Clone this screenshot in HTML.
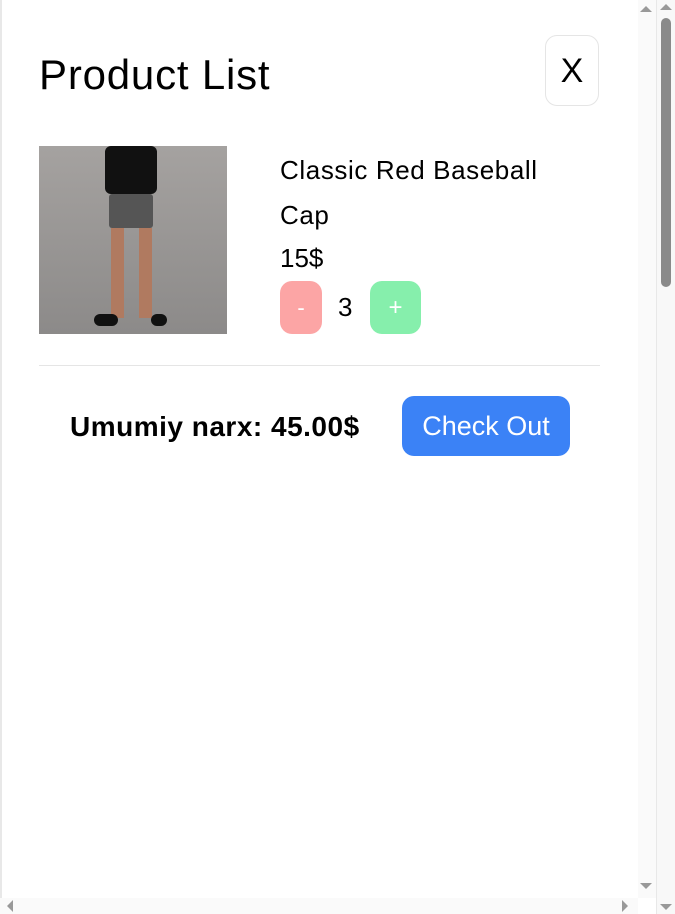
<!DOCTYPE html>
<html><head><style>
body{margin:0;width:675px;height:914px;overflow:hidden;background:#fff;font-family:"Liberation Sans",sans-serif;position:relative}
.abs{position:absolute}
</style></head><body>
<div class="abs" style="left:0;top:0;width:2px;height:914px;background:#e8e8e8"></div>
<div class="abs" style="left:39px;top:50px;font-size:42px;line-height:50px;color:#000;letter-spacing:0.8px">Product List</div>
<div class="abs" style="left:545px;top:35px;width:54px;height:71px;border:1px solid #e5e5e5;border-radius:12px;box-sizing:border-box;font-size:34px;line-height:71px;text-align:center">X</div>
<div class="abs" style="left:39px;top:146px;width:188px;height:188px;background:linear-gradient(#a5a2a0,#8c8a89);overflow:hidden">
 <div class="abs" style="left:66px;top:0;width:52px;height:48px;background:#111;border-radius:6px"></div>
 <div class="abs" style="left:70px;top:48px;width:44px;height:34px;background:#555;border-radius:3px"></div>
 <div class="abs" style="left:72px;top:82px;width:13px;height:90px;background:#b07a60"></div>
 <div class="abs" style="left:100px;top:82px;width:13px;height:90px;background:#b07a60"></div>
 <div class="abs" style="left:55px;top:168px;width:24px;height:12px;background:#111;border-radius:6px"></div>
 <div class="abs" style="left:112px;top:168px;width:16px;height:12px;background:#111;border-radius:6px"></div>
</div>
<div class="abs" style="left:280px;top:148px;font-size:26px;line-height:45px;width:340px;letter-spacing:0.6px">Classic Red Baseball<br>Cap</div>
<div class="abs" style="left:280px;top:240px;font-size:26px;line-height:36px">15$</div>
<div class="abs" style="left:280px;top:281px;width:42px;height:53px;background:#fca5a5;border-radius:12px;color:#fff;font-size:22px;line-height:53px;text-align:center">-</div>
<div class="abs" style="left:338px;top:281px;font-size:26px;line-height:53px">3</div>
<div class="abs" style="left:370px;top:281px;width:51px;height:53px;background:#86efac;border-radius:12px;color:#fff;font-size:24px;line-height:53px;text-align:center">+</div>
<div class="abs" style="left:39px;top:365px;width:561px;height:1px;background:#e5e5e5"></div>
<div class="abs" style="left:70px;top:407px;font-size:28px;font-weight:bold;line-height:40px;letter-spacing:0.5px;white-space:nowrap">Umumiy narx: 45.00$</div>
<div class="abs" style="left:402px;top:396px;width:168px;height:60px;background:#3b82f6;border-radius:12px;color:#fff;font-size:27px;line-height:60px;text-align:center">Check Out</div>
<div class="abs" style="left:638px;top:0;width:18px;height:898px;background:#fafafa"></div>
<div class="abs" style="left:640px;top:6px;width:0;height:0;border-left:6px solid transparent;border-right:6px solid transparent;border-bottom:6px solid #999"></div>
<div class="abs" style="left:640px;top:883px;width:0;height:0;border-left:6px solid transparent;border-right:6px solid transparent;border-top:6px solid #999"></div>
<div class="abs" style="left:0;top:898px;width:638px;height:16px;background:#fafafa"></div>
<div class="abs" style="left:7px;top:900px;width:0;height:0;border-top:6px solid transparent;border-bottom:6px solid transparent;border-right:6px solid #999"></div>
<div class="abs" style="left:622px;top:900px;width:0;height:0;border-top:6px solid transparent;border-bottom:6px solid transparent;border-left:6px solid #999"></div>
<div class="abs" style="left:656px;top:0;width:19px;height:914px;background:#f8f8f8;border-left:1px solid #e8e8e8"></div>
<div class="abs" style="left:660px;top:4px;width:0;height:0;border-left:6px solid transparent;border-right:6px solid transparent;border-bottom:6px solid #999"></div>
<div class="abs" style="left:661px;top:18px;width:10px;height:269px;background:#8a8a8a;border-radius:5px"></div>
<div class="abs" style="left:660px;top:904px;width:0;height:0;border-left:6px solid transparent;border-right:6px solid transparent;border-top:6px solid #999"></div>
</body></html>
